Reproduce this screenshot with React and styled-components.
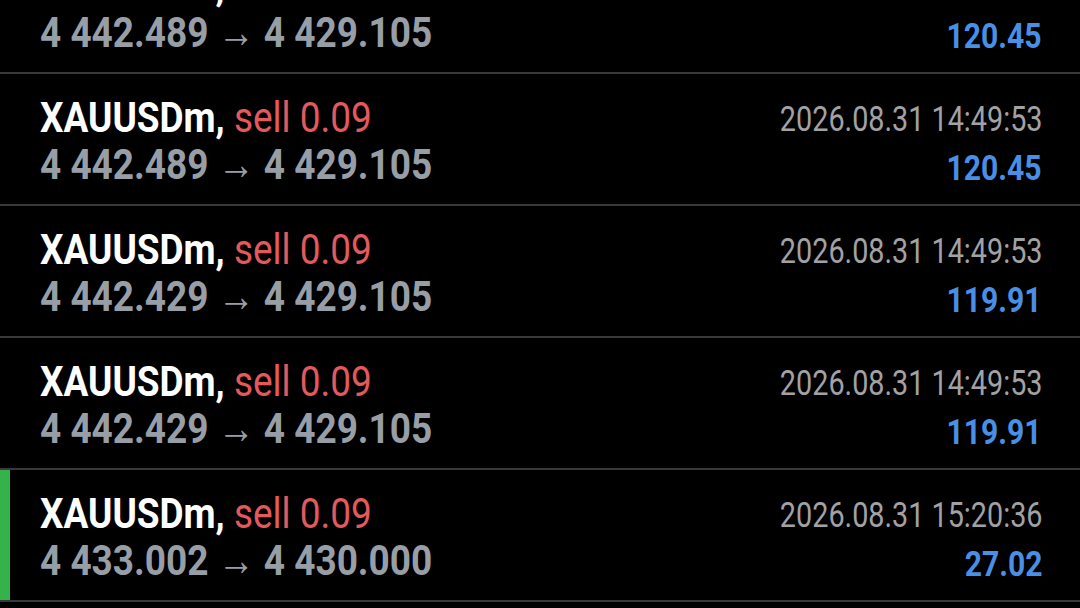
import React from "react";
import styled, { createGlobalStyle } from "styled-components";

const GlobalStyle = createGlobalStyle`
  html, body {
    margin: 0;
    padding: 0;
    background: #000;
    overflow: hidden;
  }
  body {
    font-family: Roboto, "Noto Sans", sans-serif;
  }
`;

const trades = [
  { symbol: "XAUUSDm", side: "sell", volume: "0.09", open: "4 442.489", close: "4 429.105", time: "2026.08.31 14:49:53", profit: "120.45" },
  { symbol: "XAUUSDm", side: "sell", volume: "0.09", open: "4 442.489", close: "4 429.105", time: "2026.08.31 14:49:53", profit: "120.45" },
  { symbol: "XAUUSDm", side: "sell", volume: "0.09", open: "4 442.429", close: "4 429.105", time: "2026.08.31 14:49:53", profit: "119.91" },
  { symbol: "XAUUSDm", side: "sell", volume: "0.09", open: "4 442.429", close: "4 429.105", time: "2026.08.31 14:49:53", profit: "119.91" },
  { symbol: "XAUUSDm", side: "sell", volume: "0.09", open: "4 433.002", close: "4 430.000", time: "2026.08.31 15:20:36", profit: "27.02", active: true },
];

const Screen = styled.div`
  width: 1080px;
  height: 608px;
  overflow: hidden;
  background: #000;
`;

// list is scrolled so the first row is cut off at the top
const List = styled.div`
  margin-top: -58px;
  display: flex;
  flex-direction: column;
`;

const Row = styled.div`
  height: 130px;
  border-bottom: 2px solid #3a3a3e;
  display: flex;
  justify-content: space-between;
  padding: 0 38px 0 40px;
  box-shadow: ${(p) => (p.$active ? "inset 10px 0 0 #36b24a" : "none")};
`;

const Left = styled.div`
  display: flex;
  flex-direction: column;
  padding-top: 20px;
`;

const Right = styled.div`
  display: flex;
  flex-direction: column;
  align-items: flex-end;
  padding-top: 21px;
`;

const Squeeze = styled.span`
  display: inline-block;
  white-space: nowrap;
  transform: scaleX(${(p) => p.$k || 0.86});
  transform-origin: ${(p) => (p.$right ? "right" : "left")} center;
`;

const Title = styled.div`
  font-size: 43px;
  line-height: 47px;
  font-weight: 700;
  color: #ffffff;
`;

const Side = styled.span`
  font-weight: 400;
  color: #e25a5c;
`;

const Prices = styled.div`
  font-size: 43px;
  line-height: 47px;
  font-weight: 700;
  color: #989ea6;
`;

const Arrow = styled.span`
  font-weight: 400;
`;

const Time = styled.div`
  font-size: 35px;
  line-height: 49px;
  font-weight: 400;
  color: #a2a2a4;
`;

const Profit = styled.div`
  font-size: 35px;
  line-height: 49px;
  font-weight: 700;
  color: #4a8fe6;
`;

export default function App() {
  return (
    <>
      <GlobalStyle />
      <Screen>
        <List>
          {trades.map((t, i) => (
            <Row key={i} $active={t.active}>
              <Left>
                <Title>
                  <Squeeze>
                    {t.symbol}, <Side>{t.side} {t.volume}</Side>
                  </Squeeze>
                </Title>
                <Prices>
                  <Squeeze>
                    {t.open} <Arrow>→</Arrow> {t.close}
                  </Squeeze>
                </Prices>
              </Left>
              <Right>
                <Time>
                  <Squeeze $right $k={0.822}>{t.time}</Squeeze>
                </Time>
                <Profit>
                  <Squeeze $right>{t.profit}</Squeeze>
                </Profit>
              </Right>
            </Row>
          ))}
        </List>
      </Screen>
    </>
  );
}
